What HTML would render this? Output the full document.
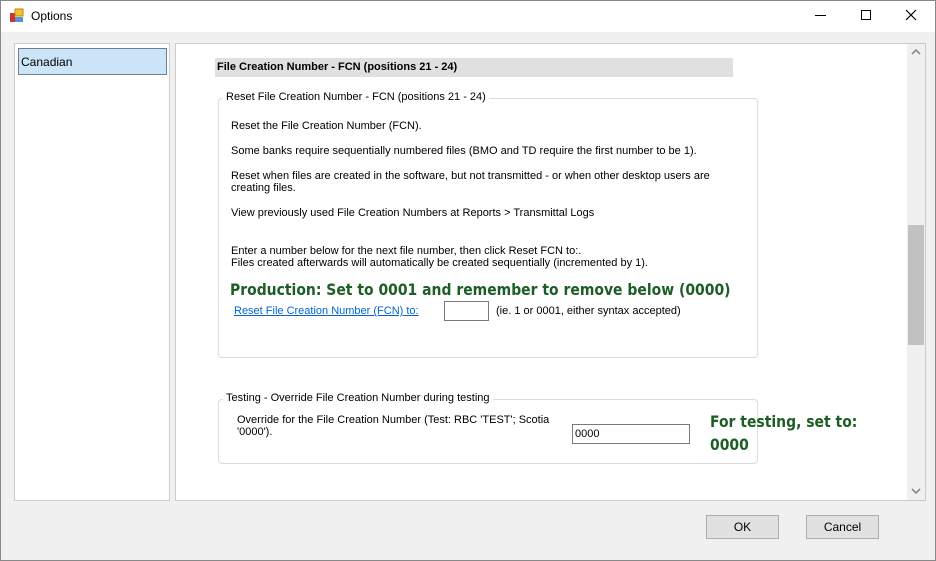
<!DOCTYPE html>
<html><head><style>
*{margin:0;padding:0;box-sizing:border-box}
body{width:936px;height:561px;overflow:hidden;font-family:"Liberation Sans",Arial,sans-serif;font-size:11px;color:#000;background:#f0f0f0;position:relative}
.a{position:absolute;white-space:nowrap}
.win{position:absolute;left:0;top:0;width:936px;height:561px;border:1px solid #888}
.gb{position:absolute;border:1px solid #dcdcdc;border-radius:4px}
.lg{position:absolute;background:#fff;padding:0 3px}
.g{color:#1d5d26;font-weight:bold;font-family:"DejaVu Sans",sans-serif;transform-origin:0 0;transform:scaleX(0.872)}
.btn{position:absolute;background:#e1e1e1;border:1px solid #adadad;text-align:center;font-size:12px;line-height:22px}
</style></head><body>
<div class="win"></div>
<div class="a" style="left:1px;top:1px;width:934px;height:31px;background:#fff"></div>
<svg class="a" style="left:9px;top:8px" width="16" height="16"><rect x="1" y="5" width="5" height="9" fill="#c33"/><rect x="6" y="1" width="8" height="7" fill="#f3c232" stroke="#b8860b"/><rect x="6" y="9" width="8" height="5" fill="#5b8fd6"/></svg>
<div class="a" style="left:31px;top:9px;font-size:12px">Options</div>
<div class="a" style="left:815px;top:15px;width:11px;height:1px;background:#000"></div>
<div class="a" style="left:861px;top:10px;width:10px;height:10px;border:1px solid #000"></div>
<svg class="a" style="left:905px;top:9px" width="12" height="12"><path d="M1 1L11 11M11 1L1 11" stroke="#000" stroke-width="1.2"/></svg>

<div class="a" style="left:14px;top:43px;width:156px;height:458px;background:#fff;border:1px solid #ccc"></div>
<div class="a" style="left:18px;top:48px;width:149px;height:27px;background:#cce4f7;border:1px solid #6e7f92"></div>
<div class="a" style="left:21px;top:55px;font-size:12px">Canadian</div>

<div class="a" style="left:175px;top:43px;width:751px;height:458px;background:#fff;border:1px solid #ccc"></div>
<div class="a" style="left:907px;top:44px;width:18px;height:456px;background:#f0f0f0"></div>
<div class="a" style="left:908px;top:225px;width:16px;height:120px;background:#c1c1c1"></div>
<svg class="a" style="left:911px;top:48px" width="10" height="8"><path d="M1 6L5 2L9 6" stroke="#888" stroke-width="1.6" fill="none"/></svg>
<svg class="a" style="left:911px;top:487px" width="10" height="8"><path d="M1 2L5 6L9 2" stroke="#888" stroke-width="1.6" fill="none"/></svg>

<div class="a" style="left:215px;top:58px;width:518px;height:19px;background:#e0e0e0"></div>
<div class="a" style="left:217px;top:61px;font-weight:bold">File Creation Number - FCN (positions 21 - 24)</div>

<div class="gb" style="left:218px;top:98px;width:540px;height:260px"></div>
<div class="lg" style="left:223px;top:91px">Reset File Creation Number - FCN (positions 21 - 24)</div>
<div class="a" style="left:231px;top:120px">Reset the File Creation Number (FCN).</div>
<div class="a" style="left:231px;top:145px">Some banks require sequentially numbered files (BMO and TD require the first number to be 1).</div>
<div class="a" style="left:231px;top:170px">Reset when files are created in the software, but not transmitted - or when other desktop users are</div>
<div class="a" style="left:231px;top:182px">creating files.</div>
<div class="a" style="left:231px;top:207px">View previously used File Creation Numbers at Reports &gt; Transmittal Logs</div>
<div class="a" style="left:231px;top:245px">Enter a number below for the next file number, then click Reset FCN to:.</div>
<div class="a" style="left:231px;top:257px">Files created afterwards will automatically be created sequentially (incremented by 1).</div>
<div class="a g" style="left:230px;top:280px;font-size:16px">Production: Set to 0001 and remember to remove below (0000)</div>
<div class="a" style="left:234px;top:305px;color:#0066cc;text-decoration:underline">Reset File Creation Number (FCN) to:</div>
<div class="a" style="left:444px;top:301px;width:45px;height:20px;border:1px solid #7a7a7a;background:#fff"></div>
<div class="a" style="left:496px;top:305px">(ie. 1 or 0001, either syntax accepted)</div>

<div class="gb" style="left:218px;top:399px;width:540px;height:65px"></div>
<div class="lg" style="left:223px;top:392px">Testing - Override File Creation Number during testing</div>
<div class="a" style="left:237px;top:414px">Override for the File Creation Number (Test: RBC 'TEST'; Scotia</div>
<div class="a" style="left:237px;top:426px">'0000').</div>
<div class="a" style="left:572px;top:424px;width:118px;height:20px;border:1px solid #7a7a7a;background:#fff;padding:3px 2px">0000</div>
<div class="a g" style="left:710px;top:412px;font-size:16px">For testing, set to:</div>
<div class="a g" style="left:710px;top:435px;font-size:16px">0000</div>

<div class="btn" style="left:706px;top:515px;width:73px;height:24px">OK</div>
<div class="btn" style="left:806px;top:515px;width:73px;height:24px">Cancel</div>
</body></html>
